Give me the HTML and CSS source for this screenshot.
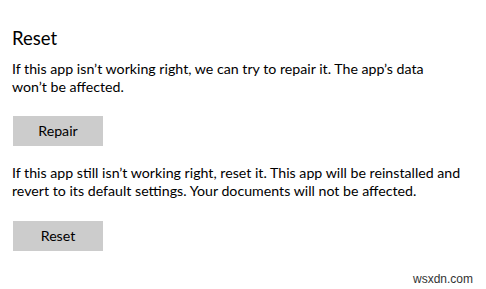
FILE: index.html
```html
<!DOCTYPE html>
<html>
<head>
<meta charset="utf-8">
<link rel="stylesheet" href="styles.css">
</head>
<body>
<main class="page">
  <h1 class="title">Reset</h1>
  <p class="desc desc-first">If this app isn’t working right, we can try to repair it. The app’s data won’t be affected.</p>
  <button class="btn btn-repair">Repair</button>
  <p class="desc desc-second">If this app still isn’t working right, reset it. This app will be reinstalled and revert to its default settings. Your documents will not be affected.</p>
  <button class="btn btn-reset">Reset</button>
</main>
<div class="watermark">wsxdn.com</div>
</body>
</html>
```

FILE: styles.css
```css
html, body {
  margin: 0;
  padding: 0;
  background: #ffffff;
}
body {
  width: 486px;
  height: 289px;
  overflow: hidden;
  position: relative;
  font-family: Lato, "Open Sans", sans-serif;
  color: #000000;
}
.page {
  display: flex;
  flex-direction: column;
  align-items: flex-start;
  padding: 26px 0 0 12px;
  width: 462px;
}
.title {
  margin: 0;
  font-size: 18.5px;
  font-weight: 400;
  line-height: 24px;
}
.desc {
  margin: 10px 0 0 0;
  font-size: 14.2px;
  line-height: 18px;
  width: 462px;
}
.desc-first {
  width: 440px;
}
.desc-second {
  margin-top: 18px;
}
.btn {
  margin-left: 1px;
  width: 90px;
  height: 30px;
  border: none;
  background: #cccccc;
  font-family: inherit;
  font-size: 14.2px;
  line-height: 30px;
  color: #000;
  padding: 0;
}
.btn-repair {
  margin-top: 20px;
}
.btn-reset {
  margin-top: 21px;
}
.watermark {
  position: absolute;
  left: 413px;
  top: 272px;
  font-family: "Liberation Sans", Arial, sans-serif;
  font-size: 12px;
  line-height: 14px;
  color: #333;
}
```
